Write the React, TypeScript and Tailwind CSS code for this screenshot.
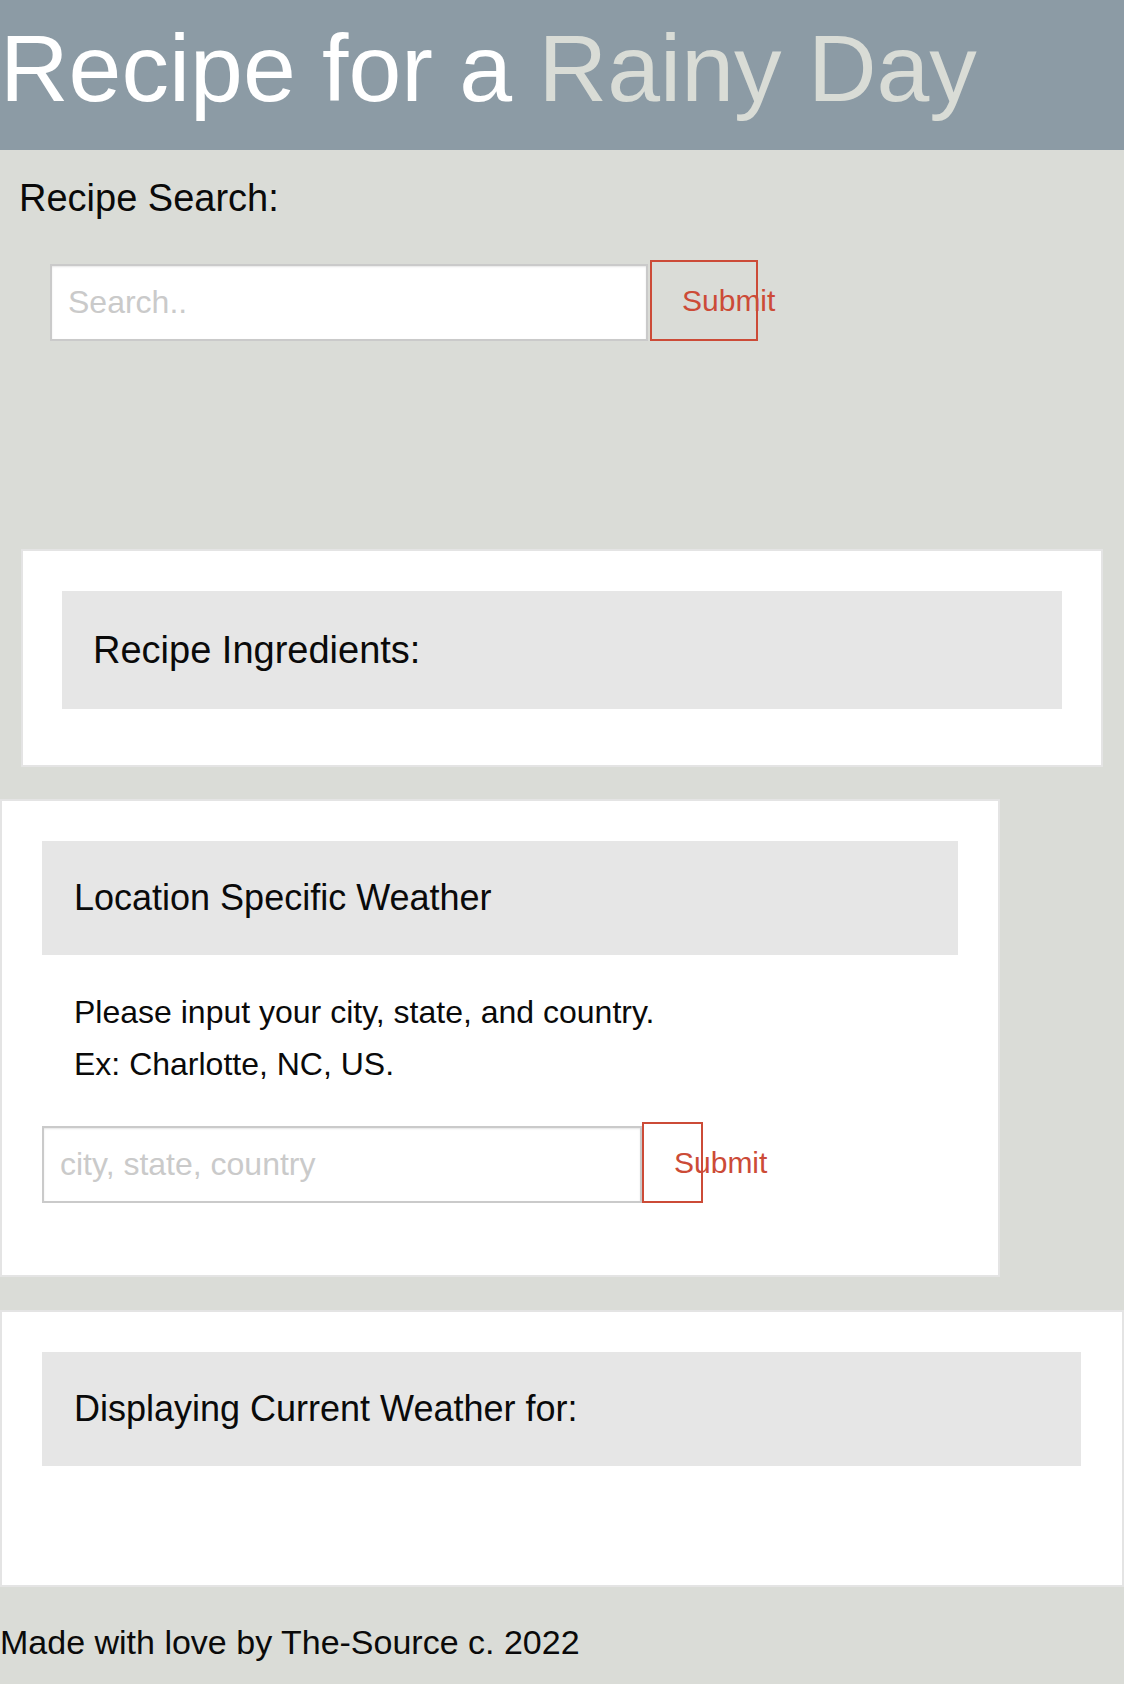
export default function App() {
    return (
        <div className="min-h-screen bg-[#dadcd7] text-[#0a0a0a] font-['Liberation_Sans',Arial,sans-serif]">
            <header className="h-[150px] bg-[#8c9ba5]">
                <h1 className="text-[95px] leading-[136px] whitespace-nowrap">
                    <span className="text-white">Recipe for a </span>
                    <span className="text-[#d9dcd6]">Rainy Day</span>
                </h1>
            </header>

            <section className="pt-[26px] pb-[208px]">
                <h2 className="ml-[19px] text-[38px] leading-[44px]">Recipe Search:</h2>
                <form className="mt-[40px] ml-[50px] flex items-end">
                    <input
                        type="text"
                        name="busqueda"
                        placeholder="Search.."
                        className="w-[598px] h-[77px] border-2 border-[#cacaca] bg-white pl-[16px] text-[32px] shadow-[inset_0_1px_2px_rgba(10,10,10,0.1)] placeholder:text-[#cacaca] focus:outline-none"
                    />
                    <button
                        type="submit"
                        className="w-[108px] h-[81px] ml-[2px] border-2 border-[#cc4b37] pl-[30px] text-left text-[30px] text-[#cc4b37] whitespace-nowrap overflow-visible"
                    >
                        Submit
                    </button>
                </form>
            </section>

            <section className="mx-[21px] border-2 border-[#e4e4e4] bg-white px-[39px] pt-[40px] pb-[56px]">
                <div className="h-[118px] bg-[#e6e6e6] flex items-center pl-[31px]">
                    <h3 className="text-[38px] leading-[44px]">Recipe Ingredients:</h3>
                </div>
            </section>

            <section className="mt-[32px] w-[1000px] border-2 border-[#e4e4e4] bg-white px-[40px] pt-[40px] pb-[72px]">
                <div className="h-[114px] bg-[#e6e6e6] flex items-center pl-[32px]">
                    <h3 className="text-[36px] leading-[42px]">Location Specific Weather</h3>
                </div>
                <div className="mt-[31px] pl-[32px] text-[32px] leading-[52px]">
                    <p>Please input your city, state, and country.</p>
                    <p>Ex: Charlotte, NC, US.</p>
                </div>
                <form className="mt-[32px] flex items-end">
                    <input
                        type="text"
                        name="ciudad"
                        placeholder="city, state, country"
                        className="w-[600px] h-[77px] border-2 border-[#cacaca] bg-white pl-[16px] text-[32px] shadow-[inset_0_1px_2px_rgba(10,10,10,0.1)] placeholder:text-[#cacaca] focus:outline-none"
                    />
                    <button
                        type="submit"
                        className="w-[61px] h-[81px] border-2 border-[#cc4b37] pl-[30px] text-left text-[30px] text-[#cc4b37] whitespace-nowrap overflow-visible"
                    >
                        Submit
                    </button>
                </form>
            </section>

            <section className="mt-[33px] border-2 border-[#e4e4e4] bg-white pl-[40px] pr-[41px] pt-[40px] pb-[119px]">
                <div className="h-[114px] bg-[#e6e6e6] flex items-center pl-[32px]">
                    <h3 className="text-[36px] leading-[42px]">Displaying Current Weather for:</h3>
                </div>
            </section>

            <footer className="pt-[35px] pb-[20px]">
                <p className="text-[34px] leading-[40px]">Made with love by The-Source c. 2022</p>
            </footer>
        </div>
    );
}
